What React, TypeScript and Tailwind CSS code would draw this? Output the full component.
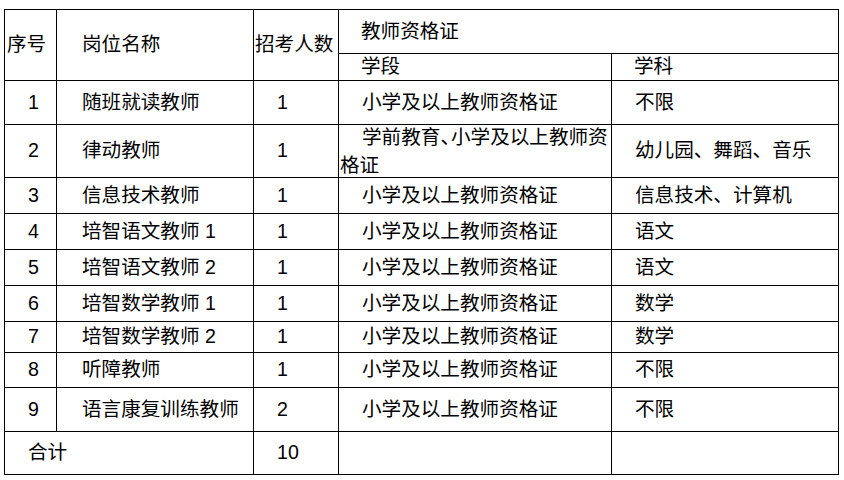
import * as React from "react";

type Row = {
  no: string;
  name: string;
  count: string;
  stage: string;
  subject: string;
};

const rows: Row[] = [
  { no: "1", name: "随班就读教师", count: "1", stage: "小学及以上教师资格证", subject: "不限" },
  { no: "2", name: "律动教师", count: "1", stage: "", subject: "幼儿园、舞蹈、音乐" },
  { no: "3", name: "信息技术教师", count: "1", stage: "小学及以上教师资格证", subject: "信息技术、计算机" },
  { no: "4", name: "培智语文教师 1", count: "1", stage: "小学及以上教师资格证", subject: "语文" },
  { no: "5", name: "培智语文教师 2", count: "1", stage: "小学及以上教师资格证", subject: "语文" },
  { no: "6", name: "培智数学教师 1", count: "1", stage: "小学及以上教师资格证", subject: "数学" },
  { no: "7", name: "培智数学教师 2", count: "1", stage: "小学及以上教师资格证", subject: "数学" },
  { no: "8", name: "听障教师", count: "1", stage: "小学及以上教师资格证", subject: "不限" },
  { no: "9", name: "语言康复训练教师", count: "2", stage: "小学及以上教师资格证", subject: "不限" },
];

function Cell({ className = "", children }: { className?: string; children?: React.ReactNode }) {
  return <div className={"flex items-center whitespace-nowrap bg-white " + className}>{children}</div>;
}

export default function App() {
  return (
    <div className="min-h-[480px] w-[844px] bg-white pl-[4px] pt-[9px] text-[19.6px] text-black [font-family:'Liberation_Sans','Noto_Sans_CJK_SC',sans-serif]">
      <div className="grid w-[835px] grid-cols-[51px_196px_84px_272px_226px] grid-rows-[43px_26px_43px_52px_35px_35px_35px_35px_30px_34px_43px_42px] gap-px bg-black p-px">
        <Cell className="row-span-2 pl-[2px]">序号</Cell>
        <Cell className="row-span-2 pl-[25px]">岗位名称</Cell>
        <Cell className="row-span-2 pl-px">招考人数</Cell>
        <Cell className="col-span-2 pl-[22px]">教师资格证</Cell>
        <Cell className="pl-[22px]">学段</Cell>
        <Cell className="pl-[22px]">学科</Cell>

        {rows.map((r) => (
          <React.Fragment key={r.no}>
            <Cell className="pl-[23px]">{r.no}</Cell>
            <Cell className="pl-[25px]">{r.name}</Cell>
            <Cell className="pl-[23px]">{r.count}</Cell>
            {r.stage ? (
              <Cell className="pl-[23px]">{r.stage}</Cell>
            ) : (
              <Cell className="pl-px">
                <div className="leading-[28px]">
                  <div className="pl-[22px]">
                    学前教育<span className="tracking-[-9px]">、</span>小学及以上教师资
                  </div>
                  <div>格证</div>
                </div>
              </Cell>
            )}
            <Cell className="pl-[23px]">{r.subject}</Cell>
          </React.Fragment>
        ))}

        <Cell className="col-span-2 pl-[23px]">合计</Cell>
        <Cell className="pl-[23px]">10</Cell>
        <Cell />
        <Cell />
      </div>
    </div>
  );
}
